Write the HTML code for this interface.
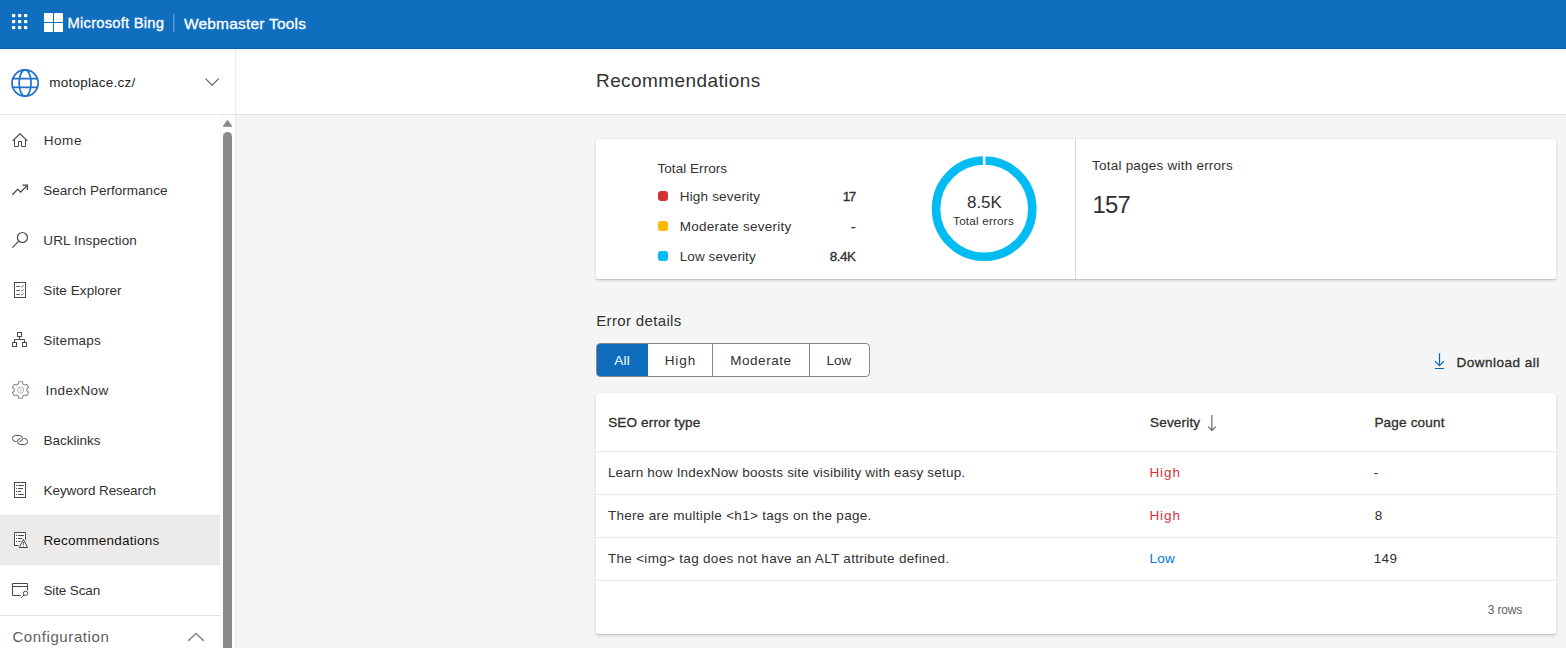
<!DOCTYPE html>
<html lang="en">
<head>
<meta charset="utf-8">
<title>Recommendations - Bing Webmaster Tools</title>
<style>
html,body{margin:0;padding:0;}
body{width:1566px;height:648px;overflow:hidden;background:#f5f5f5;font-family:"Liberation Sans",sans-serif;position:relative;}
.abs{position:absolute;}
.t{position:absolute;line-height:1;white-space:nowrap;}
#t_msbing,#t_wmt{-webkit-text-stroke:0.3px #fff;}
#hdr{left:0;top:0;width:1566px;height:48px;background:#106ebe;border-bottom:1px solid #0063b8;}
#side{left:0;top:49px;width:235px;height:599px;background:#fff;}
#sideborder{left:235px;top:49px;width:1px;height:599px;background:#eceae8;}
#topbar{left:236px;top:49px;width:1330px;height:65px;background:#fff;}
#hline{left:0;top:114px;width:1566px;height:1px;background:linear-gradient(90deg,#eceae8 0,#eceae8 236px,#e2e2e2 236px,#e2e2e2 100%);}
#sel{left:0;top:515px;width:220px;height:50px;background:#edebe9;}
#navdiv{left:0;top:615px;width:220px;height:1px;background:#e1dfdd;}
#sbtrack{left:220px;top:115px;width:15px;height:533px;background:#fcfcfc;}
#sbthumb{left:223px;top:132px;width:9px;height:530px;background:#8a8a8a;border-radius:4.5px;}
.card{position:absolute;background:#fff;border-radius:2px;box-shadow:0 1.6px 3.6px rgba(0,0,0,.115),0 .3px .9px rgba(0,0,0,.12);}
#card1{left:596px;top:139px;width:960px;height:139.5px;}
#card1div{left:1075px;top:139px;width:1px;height:139.5px;background:#dcdad8;}
#card2{left:596px;top:392.5px;width:960px;height:241.3px;}
.rowline{position:absolute;left:596px;width:960px;height:1px;background:#edebe9;}
.dot{position:absolute;left:658px;width:10px;height:10px;border-radius:3px;}
#btng{left:596px;top:343px;width:272px;height:32px;border:1px solid #8a8886;border-radius:4px;background:#fff;overflow:hidden;}
#btnall{left:0;top:0;width:50.6px;height:32px;background:#0f6cbd;}
.bsep{position:absolute;top:0;width:1px;height:32px;background:#8a8886;}
</style>
</head>
<body>
<div class="abs" id="hdr"></div>
<div class="abs" id="side"></div>
<div class="abs" id="sideborder"></div>
<div class="abs" id="topbar"></div>
<div class="abs" id="hline"></div>
<div class="abs" id="sel"></div>
<div class="abs" id="navdiv"></div>
<div class="abs" id="sbtrack"></div>
<div class="abs" id="sbthumb"></div>

<div class="card" id="card1"></div>
<div class="abs" id="card1div"></div>
<div class="dot" style="top:191px;background:#d13438"></div>
<div class="dot" style="top:221px;background:#ffb900"></div>
<div class="dot" style="top:251px;background:#00bcf2"></div>

<div class="abs" id="btng">
  <div class="abs" id="btnall"></div>
  <div class="bsep" style="left:115.1px"></div>
  <div class="bsep" style="left:211.8px"></div>
</div>

<div class="card" id="card2"></div>
<div class="rowline" style="top:451px"></div>
<div class="rowline" style="top:494px"></div>
<div class="rowline" style="top:537px"></div>
<div class="rowline" style="top:580px"></div>

<svg class="abs" id="gfx" style="left:0;top:0" width="1566" height="648" viewBox="0 0 1566 648" fill="none">
<!--SVG-->
<!-- waffle -->
<g fill="#fff">
<rect x="12" y="14" width="3.3" height="3.3" rx="0.8"/><rect x="18" y="14" width="3.3" height="3.3" rx="0.8"/><rect x="24" y="14" width="3.3" height="3.3" rx="0.8"/>
<rect x="12" y="20" width="3.3" height="3.3" rx="0.8"/><rect x="18" y="20" width="3.3" height="3.3" rx="0.8"/><rect x="24" y="20" width="3.3" height="3.3" rx="0.8"/>
<rect x="12" y="26" width="3.3" height="3.3" rx="0.8"/><rect x="18" y="26" width="3.3" height="3.3" rx="0.8"/><rect x="24" y="26" width="3.3" height="3.3" rx="0.8"/>
</g>
<!-- ms logo -->
<g fill="#fff"><rect x="44" y="13" width="9" height="9"/><rect x="54" y="13" width="9" height="9"/><rect x="44" y="23" width="9" height="9"/><rect x="54" y="23" width="9" height="9"/></g>
<!-- header divider -->
<rect x="173.3" y="14" width="1" height="18" fill="#ffffff" fill-opacity="0.45"/>
<!-- globe -->
<g stroke="#1c72c8" stroke-width="1.7" fill="none">
<circle cx="25.1" cy="83.05" r="13.1"/>
<ellipse cx="25.1" cy="83.05" rx="6" ry="13.1"/>
<path d="M12.7 78.7H37.5M12.7 87.3H37.5"/>
</g>
<!-- site chevron -->
<path d="M205.5 78.6L212.1 85.2L218.7 78.6" stroke="#605e5c" stroke-width="1.1" fill="none"/>
<!-- config chevron -->
<path d="M188.1 640.9L196 633.5L203.9 640.9" stroke="#8a8886" stroke-width="1.5" fill="none"/>
<!-- scrollbar arrow -->
<path d="M223.6 126.2L227.5 120.7L231.4 126.2Z" fill="#8a8a8a" stroke="#8a8a8a" stroke-width="1.2" stroke-linejoin="round"/>
<!-- nav icons -->
<g stroke="#4a4846" stroke-width="1" fill="none" stroke-linejoin="miter">
<!-- home -->
<path d="M12.6 140.8L20 133.8L27.4 140.8" stroke-width="1.15"/>
<path d="M14.5 139.4V146.5H18.5V141.5H21.5V146.5H25.5V139.4"/>
<!-- trending -->
<path d="M12.4 194.7L17.8 189.1L20.6 192.1L27.2 185.5" stroke-width="1.3"/>
<path d="M22.4 185.2H27.4V190" stroke-width="1.3"/>
<!-- search -->
<circle cx="22.4" cy="237.5" r="5" stroke-width="1.2"/>
<path d="M18.7 241.2L12.4 247.6" stroke-width="1.2"/>
<!-- site explorer -->
<rect x="14.5" y="282.5" width="11" height="15"/>
<path d="M16.3 286.5H19.9M16.3 290.5H19.9M16.3 294.5H19.9" stroke-width="0.9"/>
<path d="M20.9 286.3l.9 .9 1.8-2.1M20.9 290.3l.9 .9 1.8-2.1M20.9 294.3l.9 .9 1.8-2.1" stroke-width="0.95" stroke="#5b6f86"/>
<!-- sitemap -->
<rect x="17.5" y="332.5" width="4" height="4"/>
<rect x="12.5" y="342.5" width="4" height="4"/>
<rect x="22.5" y="342.5" width="4" height="4"/>
<path d="M19.5 336.5V339.5M14.5 342.5V339.5H24.5V342.5"/>
<!-- backlinks -->
<path d="M16.4 441.5H15.5A3 3 0 0 1 15.5 435.5H19.5A3 3 0 0 1 22.5 438.5A3 3 0 0 1 19.5 441.5"/>
<path d="M23.6 438.5H24.5A3 3 0 0 1 24.5 444.5H20.5A3 3 0 0 1 17.5 441.5A3 3 0 0 1 20.5 438.5"/>
<!-- keyword research -->
<rect x="14.5" y="482.5" width="11" height="15"/>
<path d="M16 485.5H17M18.1 485.5H23.8M16 488.5H17M18.1 488.5H23M16 491.5H17M18.1 491.5H21M16 494.5H17M18.1 494.5H23.8"/>
<!-- recommendations -->
<path d="M18.7 545.5H14.5V532.5H25.5V539.8" fill="#fff" stroke-linejoin="miter"/>
<path d="M16 535.5H17M18.1 535.5H23.8M16 538.5H17M18.1 538.5H22M16 541.5H17M18.1 541.5H20.5"/>
<path d="M23.4 539.2L19.4 547.5H27.5Z" fill="#fff" stroke-linejoin="round"/>
<path d="M23.4 541.8V545.2M23.4 546V546.8" stroke-width="0.9"/>
<!-- site scan -->
<path d="M20.8 595.5H12.5V583.5H27.5V590.3"/>
<path d="M12.5 586.5H27.5"/>
<circle cx="25.6" cy="593.3" r="2.2"/>
<path d="M24 595L21 597.9"/>
</g>
<!-- gear (indexnow) -->
<g stroke="#8f8d8b" stroke-width="1.1" fill="none" stroke-linejoin="round">
<path d="M18.26 384.03 L18.64 381.72 L22.46 381.72 L22.84 384.03 L24.58 385.03 L26.77 384.20 L28.68 387.51 L26.87 389.00 L26.87 391.00 L28.68 392.49 L26.77 395.80 L24.58 394.97 L22.84 395.97 L22.46 398.28 L18.64 398.28 L18.26 395.97 L16.52 394.97 L14.33 395.80 L12.42 392.49 L14.23 391.00 L14.23 389.00 L12.42 387.51 L14.33 384.20 L16.52 385.03Z"/>
<circle cx="20.55" cy="390" r="3.2" stroke-width="0.8" stroke="#a9a7a5"/>
<path d="M19.9 388.2L21.7 390L19.9 391.8" stroke-width="0.8" stroke="#a9a7a5"/>
</g>
<!-- donut -->
<circle cx="984.2" cy="208.7" r="48.15" stroke="#00bcf2" stroke-width="8.5" fill="none"/>
<rect x="982.9" y="155" width="2.6" height="10.5" fill="#fff"/>
<!-- download icon -->
<path d="M1439.5 353.2V365.4M1435 361.1L1439.5 365.6L1444 361.1M1435 368.5H1444" stroke="#0c64ba" stroke-width="1.2" fill="none"/>
<!-- sort arrow -->
<path d="M1211.9 415V430.3M1208.1 426.6L1211.9 430.5L1215.7 426.6" stroke="#605e5c" stroke-width="1.1" fill="none"/>

</svg>

<div class="t" id="t_msbing" style="left:67.60px;top:16.20px;font-size:14.8px;color:#ffffff;letter-spacing:0.200px;">Microsoft Bing</div>
<div class="t" id="t_wmt" style="left:183.90px;top:15.65px;font-size:15.5px;color:#ffffff;letter-spacing:0.207px;">Webmaster Tools</div>
<div class="t" id="t_site" style="left:49.30px;top:75.75px;font-size:13.5px;color:#201f1e;letter-spacing:0.217px;">motoplace.cz/</div>
<div class="t" id="t_home" style="left:43.80px;top:133.75px;font-size:13.5px;color:#323130;letter-spacing:0.533px;">Home</div>
<div class="t" id="t_sp" style="left:43.30px;top:183.75px;font-size:13.5px;color:#323130;letter-spacing:0.018px;">Search Performance</div>
<div class="t" id="t_url" style="left:43.30px;top:233.75px;font-size:13.5px;color:#323130;letter-spacing:0.131px;">URL Inspection</div>
<div class="t" id="t_se" style="left:43.30px;top:283.75px;font-size:13.5px;color:#323130;letter-spacing:0.083px;">Site Explorer</div>
<div class="t" id="t_sm" style="left:43.30px;top:333.75px;font-size:13.5px;color:#323130;letter-spacing:0.157px;">Sitemaps</div>
<div class="t" id="t_in" style="left:45.60px;top:383.75px;font-size:13.5px;color:#323130;letter-spacing:0.371px;">IndexNow</div>
<div class="t" id="t_bl" style="left:43.60px;top:433.75px;font-size:13.5px;color:#323130;letter-spacing:-0.025px;">Backlinks</div>
<div class="t" id="t_kr" style="left:43.60px;top:483.75px;font-size:13.5px;color:#323130;letter-spacing:-0.107px;">Keyword Research</div>
<div class="t" id="t_rec" style="left:43.40px;top:533.75px;font-size:13.5px;color:#111111;letter-spacing:0.229px;">Recommendations</div>
<div class="t" id="t_ss" style="left:43.40px;top:583.75px;font-size:13.5px;color:#323130;letter-spacing:-0.125px;">Site Scan</div>
<div class="t" id="t_cfg" style="left:12.40px;top:628.50px;font-size:15px;color:#605e5c;letter-spacing:0.600px;">Configuration</div>
<div class="t" id="t_title" style="left:596.00px;top:70.70px;font-size:19px;color:#323130;letter-spacing:0.414px;">Recommendations</div>
<div class="t" id="t_te" style="left:657.50px;top:161.55px;font-size:13.5px;color:#323130;letter-spacing:0.045px;">Total Errors</div>
<div class="t" id="t_hs" style="left:679.70px;top:189.75px;font-size:13.5px;color:#323130;letter-spacing:0.192px;">High severity</div>
<div class="t" id="t_ms" style="left:679.70px;top:219.75px;font-size:13.5px;color:#323130;letter-spacing:0.269px;">Moderate severity</div>
<div class="t" id="t_ls" style="left:679.70px;top:249.75px;font-size:13.5px;color:#323130;letter-spacing:0.091px;">Low severity</div>
<div class="t" id="t_17" style="left:842.70px;top:189.75px;font-size:13.5px;color:#323130;-webkit-text-stroke:0.35px #323130;letter-spacing:-1.400px;">17</div>
<div class="t" id="t_dash" style="left:851.00px;top:219.75px;font-size:13.5px;color:#323130;-webkit-text-stroke:0.35px #323130;">-</div>
<div class="t" id="t_84k" style="left:829.80px;top:249.75px;font-size:13.5px;color:#323130;-webkit-text-stroke:0.35px #323130;letter-spacing:-0.500px;">8.4K</div>
<div class="t" id="t_85k" style="left:967.00px;top:193.50px;font-size:17px;color:#323130;letter-spacing:-0.033px;">8.5K</div>
<div class="t" id="t_tot" style="left:953.10px;top:215.25px;font-size:11.7px;color:#323130;letter-spacing:0.200px;">Total errors</div>
<div class="t" id="t_tpe" style="left:1092.00px;top:158.55px;font-size:13.5px;color:#323130;letter-spacing:0.227px;">Total pages with errors</div>
<div class="t" id="t_157" style="left:1092.40px;top:192.70px;font-size:23.8px;color:#323130;letter-spacing:-0.650px;">157</div>
<div class="t" id="t_ed" style="left:596.20px;top:312.70px;font-size:15px;color:#323130;letter-spacing:0.350px;">Error details</div>
<div class="t" id="t_all" style="left:614.30px;top:353.75px;font-size:13.5px;color:#ffffff;letter-spacing:0.250px;">All</div>
<div class="t" id="t_high" style="left:664.70px;top:353.75px;font-size:13.5px;color:#323130;letter-spacing:0.900px;">High</div>
<div class="t" id="t_mod" style="left:730.20px;top:353.75px;font-size:13.5px;color:#323130;letter-spacing:0.557px;">Moderate</div>
<div class="t" id="t_low" style="left:826.50px;top:353.75px;font-size:13.5px;color:#323130;">Low</div>
<div class="t" id="t_dl" style="left:1456.50px;top:355.95px;font-size:13.5px;color:#323130;-webkit-text-stroke:0.35px #323130;letter-spacing:0.500px;">Download all</div>
<div class="t" id="t_seo" style="left:608.20px;top:416.05px;font-size:13.5px;color:#323130;-webkit-text-stroke:0.35px #323130;letter-spacing:0.154px;">SEO error type</div>
<div class="t" id="t_sev" style="left:1150.00px;top:416.05px;font-size:13.5px;color:#323130;-webkit-text-stroke:0.35px #323130;letter-spacing:0.186px;">Severity</div>
<div class="t" id="t_pc" style="left:1374.40px;top:416.05px;font-size:13.5px;color:#323130;-webkit-text-stroke:0.35px #323130;letter-spacing:0.200px;">Page count</div>
<div class="t" id="t_r1" style="left:607.90px;top:465.55px;font-size:13.5px;color:#323130;letter-spacing:0.198px;">Learn how IndexNow boosts site visibility with easy setup.</div>
<div class="t" id="t_r2" style="left:607.90px;top:508.55px;font-size:13.5px;color:#323130;letter-spacing:0.300px;">There are multiple &lt;h1&gt; tags on the page.</div>
<div class="t" id="t_r3" style="left:607.90px;top:551.55px;font-size:13.5px;color:#323130;letter-spacing:0.308px;">The &lt;img&gt; tag does not have an ALT attribute defined.</div>
<div class="t" id="t_r1s" style="left:1149.40px;top:465.55px;font-size:13.5px;color:#d13438;letter-spacing:0.967px;">High</div>
<div class="t" id="t_r2s" style="left:1149.40px;top:508.55px;font-size:13.5px;color:#d13438;letter-spacing:0.967px;">High</div>
<div class="t" id="t_r3s" style="left:1149.40px;top:551.55px;font-size:13.5px;color:#0078d4;letter-spacing:0.300px;">Low</div>
<div class="t" id="t_r1c" style="left:1373.70px;top:465.55px;font-size:13.5px;color:#323130;">-</div>
<div class="t" id="t_r2c" style="left:1374.70px;top:508.55px;font-size:13.5px;color:#323130;">8</div>
<div class="t" id="t_r3c" style="left:1373.70px;top:551.55px;font-size:13.5px;color:#323130;letter-spacing:0.400px;">149</div>
<div class="t" id="t_rows" style="left:1487.70px;top:604.20px;font-size:12px;color:#605e5c;letter-spacing:-0.140px;">3 rows</div>
</body>
</html>
